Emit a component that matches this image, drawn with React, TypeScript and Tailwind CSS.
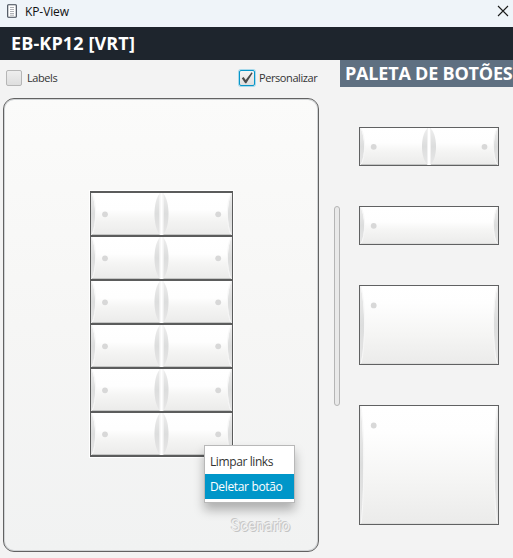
import React from "react";

type KeyFaceProps = { w: number; h: number; split?: boolean; dotY: number; dots: number[]; curve?: number };

/* The moulded face of a keypad key: shaded plate, curved side bevels and LED dots. */
function KeyFace({ w, h, split = false, dotY, dots, curve = 4 }: KeyFaceProps) {
  const id = React.useId();
  const m = w / 2;
  const a = h * 0.25;
  const b = h * 0.75;
  const c = curve * 1.33;
  return (
    <svg width={w} height={h} viewBox={`0 0 ${w} ${h}`} className="block">
      <defs>
        <linearGradient id={id + "f"} x1="0" y1="0" x2="0" y2="1">
          <stop offset="0" stopColor="#ffffff" />
          <stop offset={h < 50 ? "0.4" : "0.22"} stopColor="#fefefe" />
          <stop offset="0.62" stopColor="#f5f5f4" />
          <stop offset="1" stopColor="#ebebea" />
        </linearGradient>
        <linearGradient id={id + "s"} x1="0" y1="0" x2="0" y2="1">
          <stop offset="0" stopColor="#ededed" />
          <stop offset="0.5" stopColor="#dcdddd" />
          <stop offset="1" stopColor="#e6e6e6" />
        </linearGradient>
      </defs>
      <rect width={w} height={h} fill={`url(#${id}f)`} />
      <path d={`M0 0H0.5C${c} ${a} ${c} ${b} 0.5 ${h}H0Z`} fill={`url(#${id}s)`} />
      <path d={`M1 0C${c + 0.5} ${a} ${c + 0.5} ${b} 1 ${h}`} fill="none" stroke="#f7f7f7" />
      <path d={`M${w} 0H${w - 0.5}C${w - c} ${a} ${w - c} ${b} ${w - 0.5} ${h}H${w}Z`} fill={`url(#${id}s)`} />
      <path d={`M${w - 1} 0C${w - c - 0.5} ${a} ${w - c - 0.5} ${b} ${w - 1} ${h}`} fill="none" stroke="#f7f7f7" />
      {split && (
        <>
          <path d={`M${m - 2} 1C${m - 8.7} ${a - 2} ${m - 8.7} ${b + 2} ${m - 2} ${h - 1}Z`} fill={`url(#${id}s)`} />
          <path d={`M${m + 2} 1C${m + 8.7} ${a - 2} ${m + 8.7} ${b + 2} ${m + 2} ${h - 1}Z`} fill={`url(#${id}s)`} />
          <rect x={m - 2} width="4" height={h} fill="#f1f1f1" />
          <rect x={m - 1} width="2" height={h} fill="#ffffff" />
        </>
      )}
      <path d={`M1 ${h - 0.5}H${split ? m - 2 : w - 1}${split ? `M${m + 2} ${h - 0.5}H${w - 1}` : ""}`} stroke={split ? "#c4c5c4" : "#dededd"} />
      {dots.map((x) => (
        <circle key={x} cx={x} cy={dotY} r="2.9" fill="#d8d8d8" />
      ))}
    </svg>
  );
}

function Header() {
  return (
    <>
      <div className="flex h-[27px] items-start justify-between bg-[#eff4f9]">
        <div className="flex">
          <svg width="11" height="16" viewBox="0 0 11 16" className="ml-[7px] mt-[3px]">
            <rect x="0.7" y="1.7" width="8.6" height="12.6" rx="0.8" fill="#fff" stroke="#3c4450" strokeWidth="1.1" />
            <path d="M3 4.5H7M3 6.5H7M3 8.5H7M3 10.5H7M3 12.2H7" stroke="#9a9da3" strokeWidth="0.8" />
          </svg>
          <span className="ml-[7px] mt-[4px] text-[12px] leading-4 tracking-[-0.1px] text-[#111]">KP-View</span>
        </div>
        <svg width="12" height="12" viewBox="0 0 12 12" className="mr-[4px] mt-[5px]">
          <path d="M1 1L11 11M11 1L1 11" stroke="#1b1b1b" strokeWidth="1.1" />
        </svg>
      </div>
      <div className="h-[33px] bg-[#1e252d] pl-[11px] text-[18px] font-bold leading-[33px] text-white">
        <span className="tracking-[0.12px]">EB-KP12 [VRT]</span>
      </div>
    </>
  );
}

function ContextMenu() {
  return (
    <div className="absolute left-[200px] top-[346px] h-[58px] w-[91px] border border-[#b8b8b8] bg-white pt-[3px] text-[12px] leading-[25px] text-[#333] shadow-[0_7px_10px_rgba(0,0,0,0.28)]">
      <div className="h-[25px] pl-[5px] tracking-[-0.4px]">Limpar links</div>
      <div className="mt-0 h-[25px] bg-[#0096c9] pl-[5px] tracking-[-0.34px] text-white">Deletar botão</div>
    </div>
  );
}

function Keypad() {
  return (
    <div className="relative ml-[3px] h-[454px] w-[316px] rounded-[11px] border border-[#626262] bg-linear-to-b from-[#fbfbfa] via-[#f6f6f5] to-[#f1f2f2] shadow-[inset_0_0_0_1px_#d0d3d5]">
      <div className="ml-[86px] mt-[92px] w-[143px] border-x border-t-2 border-[#5b5c5c] shadow-[0_0_0_1px_#fff]">
        {[0, 1, 2, 3, 4, 5].map((row) => (
          <div key={row} className="h-[44px] border-b-2 border-[#5b5c5c]">
            <KeyFace w={141} h={42} split dotY={21.3} dots={[14, 127.2]} />
          </div>
        ))}
      </div>
      <div className="absolute left-[227px] top-[417px] origin-left scale-x-[0.95] font-['Roboto'] text-[16px] leading-5 text-[#f0f0f0] [text-shadow:-1px_-1px_0_#c9c9c9,1px_1px_0_#c4c4c4]">
        Scenario
      </div>
      <ContextMenu />
    </div>
  );
}

function Toolbar() {
  return (
    <div className="flex h-[38px] items-start pt-[10px] text-[11px] leading-4 text-[#333]">
      <div className="ml-[6px] h-4 w-4 rounded-[2px] border border-[#b6b6b6] bg-linear-to-b from-[#eeeeee] to-[#dedede]" />
      <span className="ml-[5px] tracking-[-0.42px]">Labels</span>
      <div className="ml-auto h-4 w-4 rounded-[2px] border border-[#0796c9] bg-linear-to-b from-[#f5f5f5] to-[#dedede] shadow-[0_0_0_1px_#a8d9eb]">
        <svg width="14" height="14" viewBox="0 0 14 14">
          <path d="M1.8 7.2L3.6 6L5.7 9L11.6 1.2L12.6 2.2L6.3 12.2H5.2Z" fill="#4b4b4b" />
        </svg>
      </div>
      <span className="ml-[4px] mr-[21px] w-[60px] whitespace-nowrap tracking-[-0.42px]">Personalizar</span>
    </div>
  );
}

function Palette() {
  return (
    <div className="w-[173px]">
      <div className="h-[27px] whitespace-nowrap bg-[#5f7081] pl-[5px] text-[18px] font-bold leading-[27px] text-white">
        <span className="tracking-[-0.2px]">PALETA DE BOTÕES</span>
      </div>
      <div className="ml-[19px] mt-[40px] flex w-[140px] flex-col gap-[40px]">
        <div className="h-[39px] border border-[#606162]">
          <KeyFace w={138} h={37} split dotY={18.8} dots={[13.7, 124.5]} />
        </div>
        <div className="h-[39px] border border-[#606162]">
          <KeyFace w={138} h={37} dotY={18.8} dots={[13.7]} />
        </div>
        <div className="h-[80px] border border-[#606162]">
          <KeyFace w={138} h={78} dotY={19.4} dots={[13.7]} />
        </div>
        <div className="h-[120px] border border-[#606162]">
          <KeyFace w={138} h={118} dotY={19.5} dots={[13.7]} curve={3.2} />
        </div>
      </div>
    </div>
  );
}

export default function App() {
  return (
    <div className="h-[558px] w-[513px] overflow-hidden bg-[#f3f3f3] font-['Open_Sans','Noto_Sans',sans-serif]">
      <Header />
      <div className="flex">
        <div className="flex w-[340px]">
          <div className="w-[334px]">
            <div className="w-[340px]">
              <Toolbar />
            </div>
            <Keypad />
          </div>
          <div className="mt-[146px] h-[200px] w-[6px] rounded-full border border-[#b5b5b5] bg-[#e9e9e9]" />
        </div>
        <Palette />
      </div>
    </div>
  );
}
